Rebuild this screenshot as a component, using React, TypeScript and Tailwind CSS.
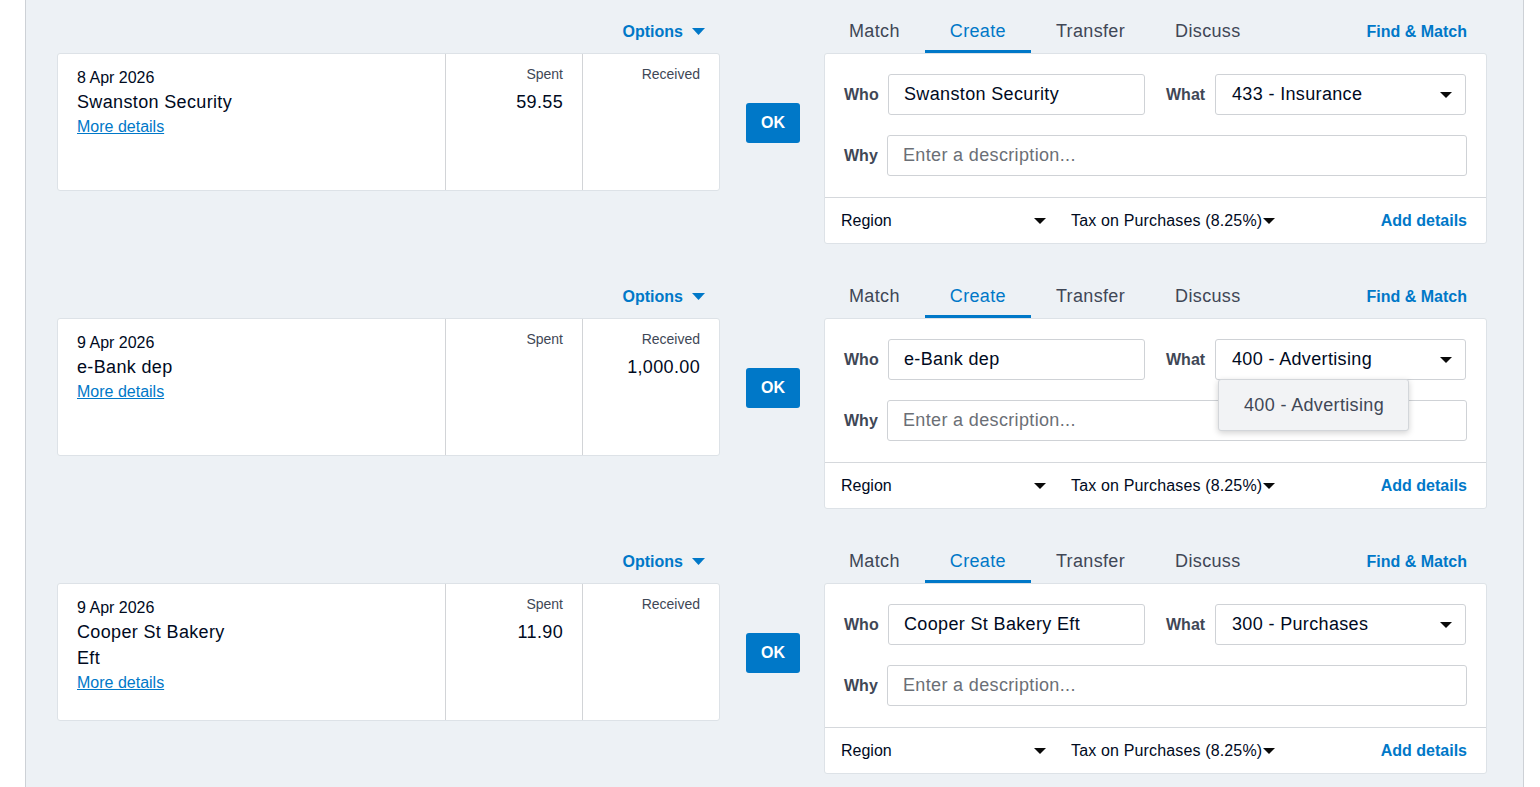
import React from "react";

const FONT = "font-['Liberation_Sans',Arial,sans-serif]";

function Tri({ color, w = 12, h = 6, className = "" }: { color: string; w?: number; h?: number; className?: string }) {
  return (
    <svg width={w} height={h} viewBox={`0 0 ${w} ${h}`} className={className}>
      <polygon points={`0,0 ${w},0 ${w / 2},${h}`} fill={color} />
    </svg>
  );
}

type Row = {
  date: string;
  name: string;
  spent: string;
  received: string;
  who: string;
  what: string;
  open?: boolean;
  wrap?: boolean;
};

const rows: Row[] = [
  { date: "8 Apr 2026", name: "Swanston Security", spent: "59.55", received: "", who: "Swanston Security", what: "433 - Insurance" },
  { date: "9 Apr 2026", name: "e-Bank dep", spent: "", received: "1,000.00", who: "e-Bank dep", what: "400 - Advertising", open: true },
  { date: "9 Apr 2026", name: "Cooper St Bakery Eft", spent: "11.90", received: "", who: "Cooper St Bakery Eft", what: "300 - Purchases", wrap: true },
];

function StatementRow({ r }: { r: Row }) {
  return (
    <div className="flex h-[265px] shrink-0">
      {/* Left column */}
      <div className="w-[663px] flex flex-col">
        <div className="h-[53px] flex items-end justify-end pr-[15px] pb-[11px]">
          <span className="text-[16px] leading-[20px] font-bold text-[#0078c8]">Options</span>
          <Tri color="#0078c8" w={13} h={7} className="ml-[9px] mb-[7px]" />
        </div>
        <div className="h-[138px] bg-white border border-[#dde2e7] rounded-[3px] flex">
          <div className="flex-1 pl-[19px] pt-[13px]">
            <div className="text-[16px] leading-[22px] text-[#000a1e]">{r.date}</div>
            <div className={`text-[18px] leading-[26px] tracking-[0.35px] text-[#000a1e] ${r.wrap ? "w-[160px]" : ""}`}>{r.name}</div>
            <div className="mt-[1px] text-[16px] leading-[22px] text-[#0078c8] underline">More details</div>
          </div>
          <div className="w-[137px] border-l border-[#d2d4d7] text-right pr-[19px] pt-[10px]">
            <div className="text-[14px] leading-[20px] text-[#404756]">Spent</div>
            <div className="mt-[5px] text-[18px] leading-[26px] tracking-[0.35px] text-[#000a1e]">{r.spent}</div>
          </div>
          <div className="w-[137px] border-l border-[#d2d4d7] text-right pr-[19px] pt-[10px]">
            <div className="text-[14px] leading-[20px] text-[#404756]">Received</div>
            <div className="mt-[5px] text-[18px] leading-[26px] tracking-[0.35px] text-[#000a1e]">{r.received}</div>
          </div>
        </div>
      </div>

      {/* OK column */}
      <div className="w-[104px] flex flex-col">
        <div className="h-[53px]" />
        <div className="h-[138px] flex items-center justify-center">
          <button className="mt-[2px] ml-[2px] w-[54px] h-[40px] bg-[#0078c8] rounded-[3px] text-white font-bold text-[16px] leading-[20px]">
            OK
          </button>
        </div>
      </div>

      {/* Right column */}
      <div className="w-[663px] flex flex-col">
        <div className="h-[53px] flex items-end">
          {["Match", "Create", "Transfer", "Discuss"].map((t) => (
            <div
              key={t}
              className={`px-[25px] pt-[7px] pb-[7px] border-b-[3px] text-[18px] leading-[24px] tracking-[0.35px] ${
                t === "Create" ? "border-[#0078c8] text-[#0078c8]" : "border-transparent text-[#404756]"
              }`}
            >
              {t}
            </div>
          ))}
          <div className="ml-auto pr-[20px] pb-[11px] text-[16px] leading-[20px] font-bold text-[#0078c8]">Find &amp; Match</div>
        </div>
        <div className="bg-white border border-[#dde2e7] rounded-[3px] flex flex-col">
          <div className="pt-[20px] px-[19px]">
            <div className="flex items-center h-[41px]">
              <div className="w-[44px] text-[16px] leading-[20px] font-bold text-[#404756]">Who</div>
              <div className="w-[257px] h-[41px] border border-[#cfd2d6] rounded-[3px] pl-[15px] flex items-center text-[18px] tracking-[0.35px] text-[#000a1e]">
                {r.who}
              </div>
              <div className="ml-[21px] w-[49px] text-[16px] leading-[20px] font-bold text-[#404756]">What</div>
              <div className="relative w-[251px] h-[41px]">
                <div className="w-full h-full border border-[#cfd2d6] rounded-[3px] pl-[16px] pr-[13px] flex items-center justify-between text-[18px] tracking-[0.35px] text-[#000a1e]">
                  <span>{r.what}</span>
                  <Tri color="#0a0a0a" w={12} h={6} />
                </div>
                {r.open && (
                  <div className="absolute left-[3px] top-[40px] z-10 w-[191px] h-[52px] bg-[#f2f3f5] border border-[#d3d6da] rounded-[3px] shadow-[0_2px_6px_rgba(0,0,0,0.18)] pl-[25px] flex items-center text-[18px] tracking-[0.35px] text-[#404756]">
                    400 - Advertising
                  </div>
                )}
              </div>
            </div>
            <div className="flex items-center h-[41px] mt-[20px]">
              <div className="w-[43px] text-[16px] leading-[20px] font-bold text-[#404756]">Why</div>
              <div className="flex-1 h-[41px] border border-[#cfd2d6] rounded-[3px] pl-[15px] flex items-center text-[18px] tracking-[0.35px] text-[#6b6f76]">
                Enter a description...
              </div>
            </div>
          </div>
          <div className="mt-[21px] border-t border-[#d5d8dc] h-[46px] pl-[16px] pr-[19px] flex items-center text-[16px] text-[#000a1e]">
            <div className="w-[205px] flex items-center justify-between">
              <span>Region</span>
              <Tri color="#0a0a0a" w={12} h={6} />
            </div>
            <div className="ml-[25px] flex items-center">
              <span className="tracking-[0.15px]">Tax on Purchases (8.25%)</span>
              <Tri color="#0a0a0a" w={12} h={6} className="ml-[1px]" />
            </div>
            <div className="ml-auto font-bold text-[#0078c8]">Add details</div>
          </div>
        </div>
      </div>
    </div>
  );
}

export default function App() {
  return (
    <div className={`${FONT} flex min-h-screen bg-white`}>
      <div className="w-[25px] shrink-0" />
      <div className="w-[1499px] shrink-0 bg-[#edf1f5] border-l border-r border-[#cdd1d6] pl-[31px] flex flex-col">
        {rows.map((r, i) => (
          <StatementRow key={i} r={r} />
        ))}
      </div>
      <div className="flex-1" />
    </div>
  );
}
